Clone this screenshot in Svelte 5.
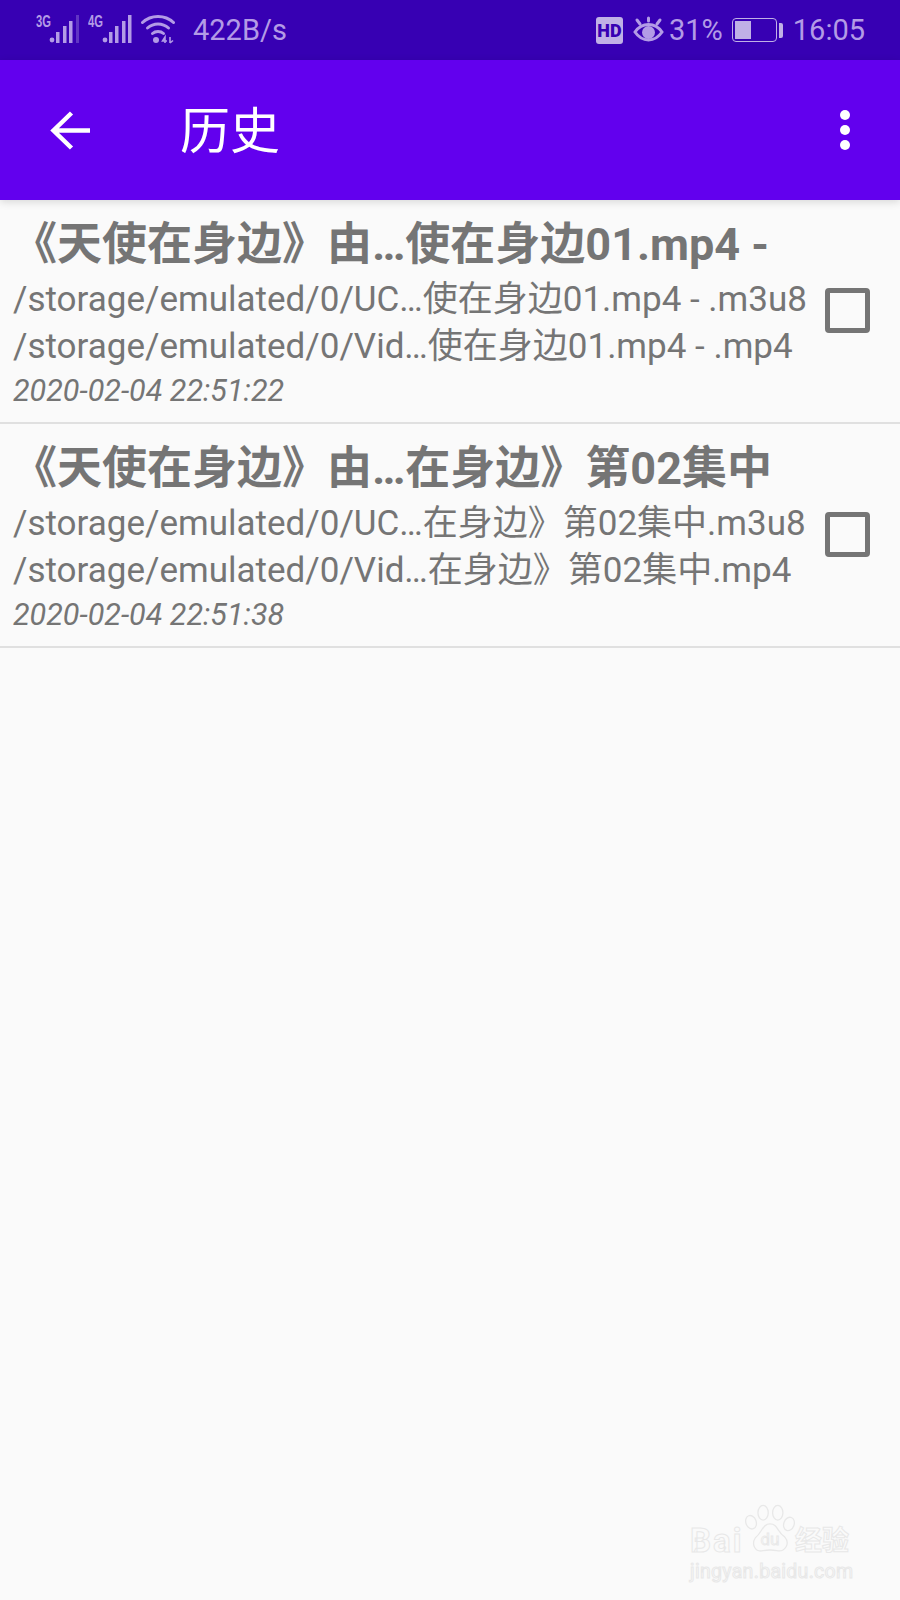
<script>
	const rows = [
		{
			title: '《天使在身边》由…使在身边01.mp4 -',
			src: '/storage/emulated/0/UC…使在身边01.mp4 - .m3u8',
			dst: '/storage/emulated/0/Vid…使在身边01.mp4 - .mp4',
			time: '2020-02-04 22:51:22'
		},
		{
			title: '《天使在身边》由…在身边》第02集中',
			src: '/storage/emulated/0/UC…在身边》第02集中.m3u8',
			dst: '/storage/emulated/0/Vid…在身边》第02集中.mp4',
			time: '2020-02-04 22:51:38'
		}
	];
</script>

<div class="page">
	<div class="status">
		<div class="signal">
			<svg class="bars" width="44" height="32" viewBox="0 -2 44 32">
				<text x="0" y="12" class="net" textLength="15" lengthAdjust="spacingAndGlyphs">3G</text>
				<circle cx="16" cy="25" r="2.4" />
				<rect x="20" y="17" width="3.5" height="11" />
				<rect x="27" y="11" width="3.5" height="17" />
				<rect x="33" y="6" width="3.5" height="22" />
				<rect x="40" y="0" width="3" height="28" opacity="0.35" />
			</svg>
			<svg class="bars" width="45" height="32" viewBox="0 -2 45 32">
				<text x="0" y="12" class="net" textLength="15" lengthAdjust="spacingAndGlyphs">4G</text>
				<circle cx="17" cy="25" r="2.4" />
				<rect x="21" y="17" width="3.5" height="11" />
				<rect x="27" y="11" width="3.5" height="17" />
				<rect x="34" y="6" width="3.5" height="22" />
				<rect x="40" y="0" width="3.5" height="28" />
			</svg>
			<svg class="wifi" width="34" height="30" viewBox="0 0 34 30">
				<path d="M1.500 7.500C10 -0.500 24 -0.500 32.500 7.500" />
				<path d="M6.500 13C12.500 7.500 21.500 7.500 27.500 13" />
				<path d="M11.500 18.500C14.500 15.800 19.500 15.800 22.500 18.500" />
				<circle cx="15" cy="25" r="3" class="fill" />
				<path class="thin" d="M24 28V22L21.500 26H26M29 22V28M29 28L32 25.500" />
			</svg>
			<span class="speed">422B/s</span>
		</div>
		<div class="sys">
			<span class="hd">HD</span>
			<svg class="eye" width="31" height="28" viewBox="0 0 31 28">
				<path d="M2 16C9 6 22 6 29 16C22 26.500 9 26.500 2 16Z" />
				<circle cx="15.500" cy="16.500" r="6.500" class="fill" />
				<path d="M4 4L7 8M15.500 2V5M27 4L24 8" />
			</svg>
			<span class="pct">31%</span>
			<div class="battery"><div class="level" style="width: 42%"></div></div>
			<div class="tip"></div>
			<span class="clock">16:05</span>
		</div>
	</div>

	<header class="bar">
		<svg class="back" width="42" height="42" viewBox="0 0 42 42">
			<path d="M3 20.500H40M21.500 3L3.500 20.500L21.500 38" />
		</svg>
		<h1>历史</h1>
		<div class="more"><i></i><i></i><i></i></div>
	</header>

	<main>
		{#each rows as row}
			<div class="row">
				<div class="body">
					<div class="title">{row.title}</div>
					<div class="path">{row.src}</div>
					<div class="path">{row.dst}</div>
					<div class="time">{row.time}</div>
				</div>
				<span class="check"></span>
			</div>
		{/each}
	</main>

	<div class="mark">
		<div class="logo">
			<span class="bai">Bai</span>
			<svg class="paw" width="50" height="54" viewBox="0 0 58 58">
				<ellipse cx="7" cy="20" rx="6" ry="8" transform="rotate(-20 7 20)" />
				<ellipse cx="21" cy="9" rx="6" ry="8.500" />
				<ellipse cx="38" cy="9" rx="6" ry="8.500" />
				<ellipse cx="51" cy="22" rx="6" ry="8" transform="rotate(20 51 22)" />
				<path d="M29 22C38 22 37 31 46 37C53 45 46 55 37 53C32 52 26 52 21 53C12 55 7 46 12 38C20 32 20 22 29 22Z" />
				<text x="29" y="46" text-anchor="middle">du</text>
			</svg>
			<span class="jy">经验</span>
		</div>
		<div class="url">jingyan.baidu.com</div>
	</div>
</div>

<style>
	:global(body) {
		margin: 0;
		background: #fafafa;
	}

	.page {
		position: relative;
		height: 1600px;
		overflow: hidden;
		background: #fafafa;
		font-family: Roboto, 'Noto Sans CJK SC', sans-serif;
	}

	.status {
		height: 60px;
		background: #3700b3;
		color: #b39be6;
		display: flex;
		justify-content: space-between;
		align-items: center;
		padding: 0 35px 0 36px;
		font-size: 29px;
	}

	.status svg {
		fill: #b39be6;
		flex-shrink: 0;
	}

	.signal {
		display: flex;
		align-items: center;
		gap: 8px;
	}

	.bars {
		margin-top: -2px;
	}

	.net {
		font-family: 'Liberation Sans Narrow', 'Liberation Sans', sans-serif;
		font-size: 16px;
		font-weight: 700;
	}

	.wifi path,
	.eye path {
		fill: none;
		stroke: #b39be6;
		stroke-width: 3;
		stroke-linecap: round;
	}

	.wifi .thin {
		stroke-width: 1.600;
		stroke-linecap: butt;
	}

	.status svg .fill {
		fill: #b39be6;
		stroke: none;
	}

	.speed {
		margin-left: 10px;
	}

	.sys {
		display: flex;
		align-items: center;
	}

	.hd {
		width: 27px;
		height: 27px;
		border-radius: 3px;
		background: #c0b0e6;
		color: #3700b3;
		font-size: 18px;
		font-weight: 900;
		line-height: 27px;
		text-align: center;
	}

	.eye {
		margin-left: 10px;
	}

	.pct {
		margin-left: 5px;
	}

	.battery {
		width: 45px;
		height: 24px;
		margin-left: 9px;
		padding: 2px;
		box-sizing: border-box;
		border: 1.500px solid #c0b0e6;
		border-radius: 4px;
	}

	.level {
		height: 100%;
		background: #c0b0e6;
	}

	.tip {
		width: 4px;
		height: 15px;
		margin-left: 2px;
		background: #c0b0e6;
		border-radius: 0 2px 2px 0;
	}

	.clock {
		margin-left: 10px;
	}

	.bar {
		height: 140px;
		background: #6200ee;
		color: #fff;
		display: flex;
		align-items: center;
		padding: 0 50px 0 50px;
		position: relative;
		box-shadow: 0 2px 8px rgba(0, 0, 0, 0.14);
	}

	.back {
		flex-shrink: 0;
		margin: 2px 88px 0 0;
	}

	.back path {
		fill: none;
		stroke: #fff;
		stroke-width: 4.500;
	}

	h1 {
		margin: 4px 0 0;
		flex: 1;
		font-size: 50px;
		font-weight: 400;
		line-height: 60px;
	}

	.more {
		display: flex;
		flex-direction: column;
		gap: 5px;
	}

	.more i {
		width: 10px;
		height: 10px;
		border-radius: 50%;
		background: #fff;
	}

	.row {
		height: 224px;
		box-sizing: border-box;
		border-bottom: 2px solid #e0e0e0;
		display: flex;
		align-items: center;
		padding: 0 30px 0 13px;
		color: #757575;
	}

	.body {
		flex: 1;
		min-width: 0;
		white-space: nowrap;
		padding-top: 2px;
	}

	.title {
		margin-left: -1px;
		font-size: 45px;
		font-weight: 700;
		line-height: 63px;
	}

	.path {
		font-size: 35px;
		line-height: 47px;
	}

	.time {
		font-size: 30.500px;
		font-style: italic;
		line-height: 41px;
	}

	.check {
		width: 45px;
		height: 45px;
		margin-bottom: 2px;
		box-sizing: border-box;
		border: 5.500px solid #757575;
		border-radius: 4px;
		flex-shrink: 0;
	}

	.mark {
		position: absolute;
		left: 690px;
		top: 1503px;
		color: transparent;
		-webkit-text-stroke: 1px #e8e8e8;
	}

	.logo {
		display: flex;
		align-items: flex-end;
		height: 54px;
	}

	.bai {
		font-size: 33px;
		font-weight: 700;
		line-height: 40px;
		letter-spacing: 2px;
		width: 55px;
		margin-bottom: -4px;
	}

	.paw {
		flex-shrink: 0;
		fill: none;
		stroke: #e8e8e8;
		stroke-width: 1.500;
	}

	.paw text {
		font-size: 20px;
		stroke-width: 1;
	}

	.jy {
		font-size: 27px;
		font-weight: 700;
		line-height: 40px;
		margin-bottom: -4px;
	}

	.url {
		font-size: 19.500px;
		line-height: 24px;
		margin-top: 3px;
		letter-spacing: 0.300px;
	}
</style>
